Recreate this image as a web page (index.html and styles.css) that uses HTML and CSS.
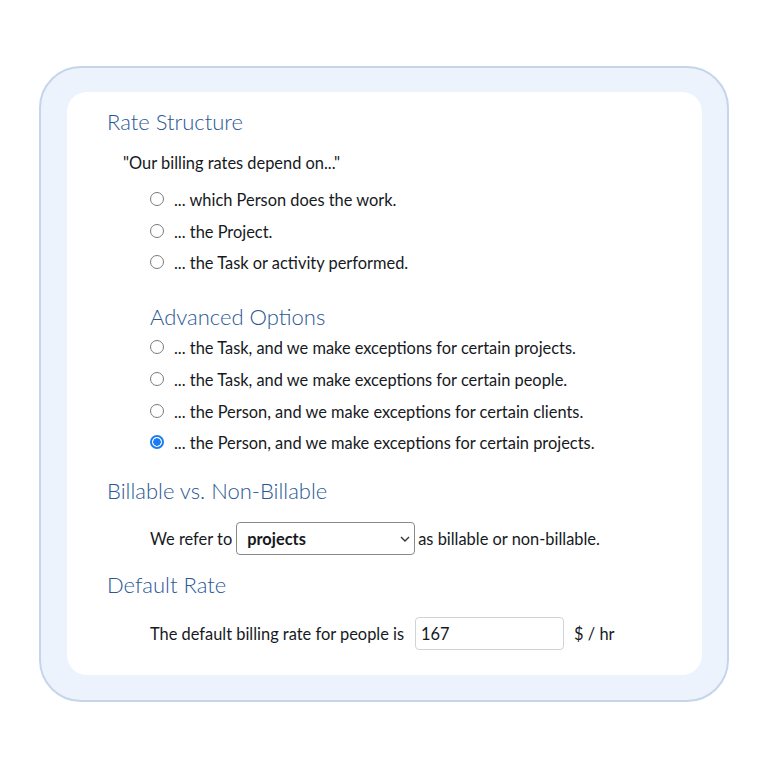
FILE: index.html
```html
<!DOCTYPE html>
<html lang="en">
<head>
    <meta charset="UTF-8">
    <title>Billing Settings</title>
    <link rel="stylesheet" href="styles.css">
</head>
<body>
    <div class="frame">
        <div class="panel">
            <h2 class="section-title">Rate Structure</h2>
            <p class="quote">"Our billing rates depend on..."</p>
            <div class="options">
                <label class="option"><input type="radio" name="rate"> ... which Person does the work.</label>
                <label class="option"><input type="radio" name="rate"> ... the Project.</label>
                <label class="option"><input type="radio" name="rate"> ... the Task or activity performed.</label>
            </div>

            <h3 class="sub-title">Advanced Options</h3>
            <div class="options advanced">
                <label class="option"><input type="radio" name="rate"> ... the Task, and we make exceptions for certain projects.</label>
                <label class="option"><input type="radio" name="rate"> ... the Task, and we make exceptions for certain people.</label>
                <label class="option"><input type="radio" name="rate"> ... the Person, and we make exceptions for certain clients.</label>
                <label class="option"><input type="radio" name="rate" checked> ... the Person, and we make exceptions for certain projects.</label>
            </div>

            <h2 class="section-title">Billable vs. Non-Billable</h2>
            <div class="field-row">
                <span>We refer to</span>
                <div class="select-wrap">
                    <select class="select">
                        <option>projects</option>
                        <option>tasks</option>
                    </select>
                    <svg class="chevron" width="10" height="6" viewBox="0 0 10 6"><path d="M1 1l4 4 4-4" fill="none" stroke="#333" stroke-width="1.4"/></svg>
                </div>
                <span>as billable or non-billable.</span>
            </div>

            <h2 class="section-title">Default Rate</h2>
            <div class="field-row rate-row">
                <span>The default billing rate for people is</span>
                <input class="text-input" type="text" value="167">
                <span class="unit">$ / hr</span>
            </div>
        </div>
    </div>
</body>
</html>
```

FILE: styles.css
```css
* {
    margin: 0;
    padding: 0;
    box-sizing: border-box;
}

body {
    background: #ffffff;
    font-family: Lato, "Open Sans", sans-serif;
    color: #16191d;
    padding: 66px 0 0 39px;
}

.frame {
    width: 690px;
    height: 636px;
    background: #ecf3fd;
    border: 2px solid #c4d5ec;
    border-radius: 42px;
    padding: 24px 25px 25px 26px;
}

.panel {
    background: #ffffff;
    border-radius: 20px;
    height: 100%;
    padding: 17px 0 0 40px;
}

.section-title {
    font-size: 22px;
    font-weight: 300;
    color: #2a5894;
    line-height: 26px;
}

.quote {
    font-size: 16.4px;
    line-height: 20px;
    margin: 18px 0 0 16px;
}

.options {
    display: flex;
    flex-direction: column;
    gap: 11.7px;
    margin: 17px 0 0 43px;
}

.option {
    display: flex;
    align-items: center;
    font-size: 16.4px;
    line-height: 20px;
}

.option input {
    appearance: none;
    width: 14px;
    height: 14px;
    border: 1px solid #7b7b7b;
    border-radius: 50%;
    margin-right: 10px;
    background: #fff;
    position: relative;
    top: -1px;
}

.option input:checked {
    border: 2px solid #1b7cf4;
    background: radial-gradient(circle, #1b7cf4 0 3.5px, #fff 4px);
}

.sub-title {
    font-size: 22px;
    font-weight: 300;
    color: #2a5894;
    line-height: 26px;
    margin: 31px 0 0 43px;
}

.options.advanced {
    margin-top: 8px;
}

.options.advanced + .section-title {
    margin-top: 25px;
}

.field-row {
    display: flex;
    align-items: center;
    font-size: 16.4px;
    margin: 18px 0 0 43px;
}

.select-wrap {
    position: relative;
    margin: 0 3px 0 4px;
}

.select {
    appearance: none;
    width: 179px;
    height: 33px;
    border: 1px solid #8a8a8a;
    border-radius: 4px;
    background: #fff;
    font-family: Lato, sans-serif;
    font-size: 16.4px;
    font-weight: 700;
    color: #16191d;
    padding: 0 10px;
}

.chevron {
    position: absolute;
    right: 5px;
    top: 14px;
}

.field-row + .section-title {
    margin-top: 17px;
}

.rate-row {
    margin-top: 19px;
}

.text-input {
    width: 149px;
    height: 33px;
    border: 1px solid #cfd4da;
    border-radius: 4px;
    margin-left: 11px;
    padding: 0 5px;
    font-family: Lato, sans-serif;
    font-size: 16.4px;
    color: #16191d;
}

.unit {
    margin-left: 10px;
}
```
